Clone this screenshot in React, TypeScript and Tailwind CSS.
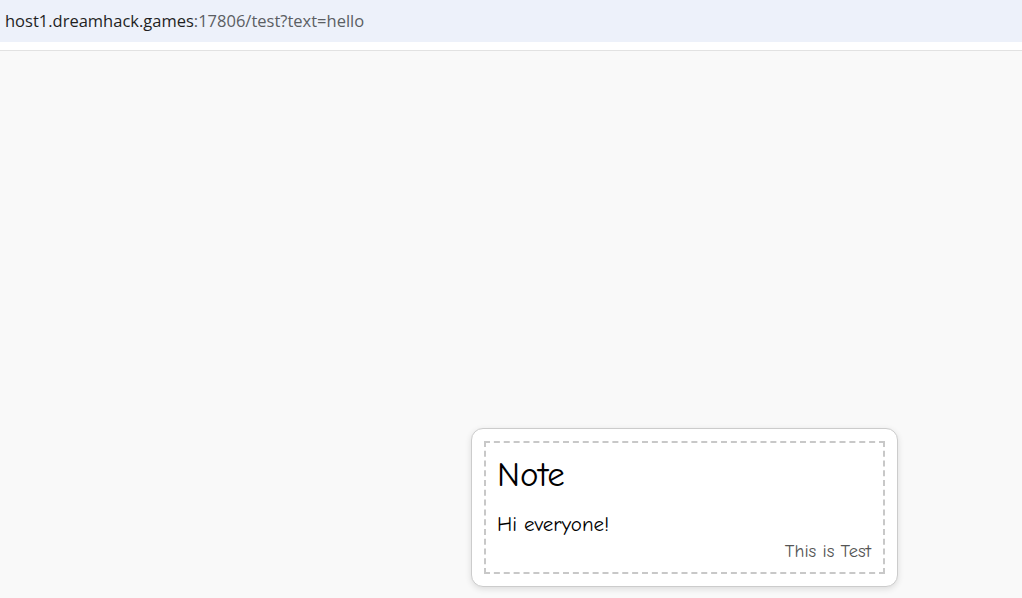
export default function App() {
  return (
    <div className="w-[1022px] h-[598px] overflow-hidden bg-[#f9f9f9] flex flex-col">
      <div className="h-[42px] bg-[#edf1fa] flex items-center pl-[5px] text-[16.5px] font-['Open_Sans','Noto_Sans',sans-serif] shrink-0">
        <span className="text-[#1f1f1f]">host1.dreamhack.games</span>
        <span className="text-[#5b5e63]">:17806/test?text=hello</span>
      </div>
      <div className="h-[8px] bg-white shrink-0" />
      <div className="h-px bg-[#e2e2e2] shrink-0" />
      <div className="flex-1 pt-[377px] pl-[471px]">
        <div className="w-[427px] h-[159px] bg-white border border-[#cccccc] rounded-[12px] shadow-[0_2px_6px_rgba(0,0,0,0.12)] p-[12px] font-['Comic_Sans_MS','Comic_Neue',cursive]">
          <div className="h-full border-2 border-dashed border-[#c8c8c8] pl-[11px] pr-[12px] pt-[12px] flex flex-col">
            <div className="text-[35px] leading-[40px] text-black font-medium">Note</div>
            <div className="text-[21px] leading-[26px] text-black mt-[16px] font-medium">Hi everyone!</div>
            <div className="text-[18.5px] leading-[22px] text-[#555] text-right mt-[3px] font-medium">This is Test</div>
          </div>
        </div>
      </div>
    </div>
  );
}
